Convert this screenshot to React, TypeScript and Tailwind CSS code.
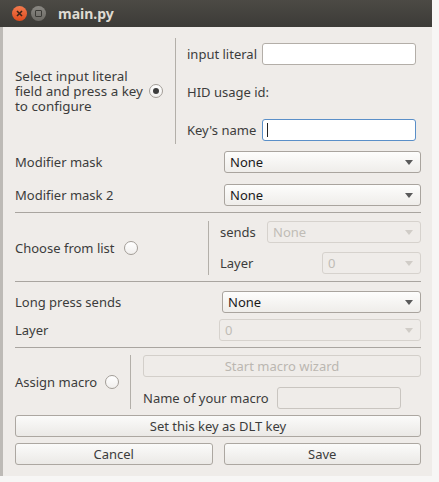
import React from "react";

function Radio({ checked = false }: { checked?: boolean }) {
  return (
    <div className="w-[14px] h-[14px] rounded-full border border-[#a29d97] bg-gradient-to-b from-white to-[#f1efed] flex items-center justify-center shrink-0">
      {checked && <div className="w-[6px] h-[6px] rounded-full bg-[#3c3c3c]" />}
    </div>
  );
}

function Combo({ value, disabled = false, className = "" }: { value: string; disabled?: boolean; className?: string }) {
  return (
    <div
      className={
        "h-[22px] rounded-[3px] border flex items-center pl-[5px] pr-[7px] " +
        (disabled
          ? "border-[#d6d2cd] bg-[#efece9] text-[#c0bcb6] "
          : "border-[#a9a49e] bg-gradient-to-b from-[#fdfdfc] to-[#efedea] text-[#1a1a1a] ") +
        className
      }
    >
      <span className="flex-1">{value}</span>
      <svg width="8" height="5" viewBox="0 0 8 5">
        <path d="M0 0 L8 0 L4 5 Z" fill={disabled ? "#d0ccc7" : "#5a5a5a"} />
      </svg>
    </div>
  );
}

function TextInput({ className = "", focus = false, disabled = false }: { className?: string; focus?: boolean; disabled?: boolean }) {
  return (
    <div
      className={
        "h-[22px] rounded-[3px] border flex items-center pl-[4px] " +
        (focus
          ? "border-[#5a8fc8] bg-white "
          : disabled
          ? "border-[#c9c5c0] bg-[#efece9] "
          : "border-[#b3aea8] bg-white ") +
        className
      }
    >
      {focus && <div className="w-px h-[14px] bg-[#222]" />}
    </div>
  );
}

function Button({ label, disabled = false, className = "" }: { label: string; disabled?: boolean; className?: string }) {
  return (
    <div
      className={
        "h-[22px] rounded-[3px] border flex items-center justify-center " +
        (disabled
          ? "border-[#d3cfca] bg-[#efece9] text-[#bbb7b1] "
          : "border-[#aca7a1] bg-gradient-to-b from-[#fbfbfa] to-[#ebe9e6] text-[#3c3c3c] ") +
        className
      }
    >
      {label}
    </div>
  );
}

const HSep = () => <div className="h-px bg-[#a9a5a0] shrink-0" />;
const VSep = () => <div className="w-px self-stretch bg-[#b3afa9] shrink-0" />;

export default function App() {
  return (
    <div className="w-[439px] h-[482px] bg-[#f7f6f5] font-['Noto_Sans','DejaVu_Sans',sans-serif] text-[13px] text-[#3c3c3c] leading-[14px]">
      <div className="w-[432px] h-[476px] flex flex-col bg-[#efece9]">
        {/* title bar */}
        <div className="h-[27px] shrink-0 bg-gradient-to-b from-[#4c4a45] to-[#3c3b37] flex items-center pl-[12px]">
          <div className="w-[15px] h-[15px] rounded-full bg-gradient-to-b from-[#f27a4d] to-[#de4a1b] flex items-center justify-center">
            <svg width="7" height="7" viewBox="0 0 7 7">
              <path d="M1 1 L6 6 M6 1 L1 6" stroke="#3a2418" strokeWidth="1.6" />
            </svg>
          </div>
          <div className="ml-[4px] w-[15px] h-[15px] rounded-full bg-gradient-to-b from-[#8a8883] to-[#6c6a65] flex items-center justify-center">
            <div className="w-[7px] h-[7px] border border-[#3c3b37] rounded-[1px]" />
          </div>
          <span className="ml-[12px] text-[14px] font-bold text-[#dfdbd2]">main.py</span>
        </div>

        <div className="flex-1 flex flex-col border-l-[3px] border-[#bdbab6] pl-[12px] pr-[11px]">
          {/* section 1 */}
          <div className="mt-[8px] h-[112px] flex">
            <div className="w-[160px] flex items-center">
              <div className="flex-1 text-[13.4px] leading-[15px]">
                Select input literal
                <br />
                field and press a key
                <br />
                to configure
              </div>
              <Radio checked />
              <div className="w-[12px]" />
            </div>
            <div className="py-[3px] flex">
              <VSep />
            </div>
            <div className="flex-1 flex flex-col gap-[17px] pt-[8px] pl-[11px] pr-[5px]">
              <div className="h-[21px] flex items-center">
                <span className="w-[75px]">input literal</span>
                <TextInput className="flex-1 h-[21px]" />
              </div>
              <div className="h-[21px] flex items-center">HID usage id:</div>
              <div className="h-[21px] flex items-center">
                <span className="w-[75px]">Key's name</span>
                <TextInput className="flex-1 h-[21px]" focus />
              </div>
            </div>
          </div>

          {/* modifier masks */}
          <div className="mt-[4px] flex flex-col gap-[11px]">
            <div className="flex items-center">
              <span className="w-[209px]">Modifier mask</span>
              <Combo value="None" className="flex-1" />
            </div>
            <div className="flex items-center">
              <span className="w-[209px]">Modifier mask 2</span>
              <Combo value="None" className="flex-1" />
            </div>
          </div>
          <div className="mt-[6px]">
            <HSep />
          </div>

          {/* choose from list */}
          <div className="mt-[8px] flex h-[54px]">
            <div className="w-[193px] flex items-center">
              <span>Choose from list</span>
              <div className="ml-[9px]">
                <Radio />
              </div>
            </div>
            <VSep />
            <div className="flex-1 flex flex-col gap-[9px] pl-[11px]">
              <div className="flex items-center">
                <span className="w-[47px]">sends</span>
                <Combo value="None" disabled className="flex-1" />
              </div>
              <div className="flex items-center">
                <span className="flex-1">Layer</span>
                <Combo value="0" disabled className="w-[99px]" />
              </div>
            </div>
          </div>
          <div className="mt-[6px]">
            <HSep />
          </div>

          {/* long press */}
          <div className="mt-[9px] flex flex-col gap-[6px]">
            <div className="flex items-center">
              <span className="w-[207px]">Long press sends</span>
              <Combo value="None" className="flex-1" />
            </div>
            <div className="flex items-center">
              <span className="w-[204px]">Layer</span>
              <Combo value="0" disabled className="flex-1" />
            </div>
          </div>
          <div className="mt-[6px]">
            <HSep />
          </div>

          {/* macro */}
          <div className="mt-[7px] flex h-[54px]">
            <div className="w-[115px] flex items-center">
              <span>Assign macro</span>
              <div className="ml-[8px]">
                <Radio />
              </div>
            </div>
            <VSep />
            <div className="flex-1 flex flex-col gap-[10px] pl-[12px]">
              <Button label="Start macro wizard" disabled />
              <div className="flex items-center">
                <span className="w-[134px]">Name of your macro</span>
                <TextInput disabled className="w-[124px]" />
              </div>
            </div>
          </div>

          {/* bottom buttons */}
          <div className="mt-[6px] flex flex-col gap-[6px]">
            <Button label="Set this key as DLT key" />
            <div className="flex gap-[11px]">
              <Button label="Cancel" className="flex-1" />
              <Button label="Save" className="flex-1" />
            </div>
          </div>
        </div>
      </div>
    </div>
  );
}
